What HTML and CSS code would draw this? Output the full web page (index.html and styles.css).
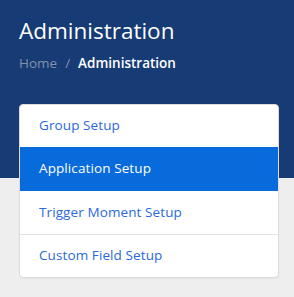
FILE: index.html
```html
<!DOCTYPE html>
<html>
<head>
<meta charset="utf-8">
<link rel="stylesheet" href="styles.css">
</head>
<body>
<header class="hero">
  <h1 class="title">Administration</h1>
  <nav class="crumbs">
    <span class="crumb-link">Home</span>
    <span class="crumb-sep">/</span>
    <span class="crumb-current">Administration</span>
  </nav>
</header>
<main class="content">
  <ul class="menu">
    <li class="menu-item">Group Setup</li>
    <li class="menu-item active">Application Setup</li>
    <li class="menu-item">Trigger Moment Setup</li>
    <li class="menu-item">Custom Field Setup</li>
  </ul>
</main>
</body>
</html>
```

FILE: styles.css
```css
* { box-sizing: border-box; }
html, body { margin: 0; padding: 0; }
body {
  background: #eeeeee;
  font-family: "Open Sans", "Noto Sans", sans-serif;
  width: 294px;
  height: 297px;
  overflow: hidden;
}
.hero {
  background: #173b74;
  height: 178px;
  padding: 15px 19px 0;
}
.title {
  margin: 0;
  color: #ffffff;
  font-size: 22.5px;
  font-weight: 400;
  line-height: 32px;
}
.crumbs {
  margin-top: 6px;
  font-size: 13.5px;
  line-height: 20px;
  display: flex;
  gap: 8px;
}
.crumb-link { color: #8192ad; }
.crumb-sep { color: #8192ad; }
.crumb-current { color: #ffffff; font-weight: 600; }
.content {
  margin-top: -74px;
  padding: 0 15px 0 19px;
}
.menu {
  list-style: none;
  margin: 0;
  padding: 0;
  background: #ffffff;
  border: 1px solid #dcdcdc;
  border-radius: 4px;
  overflow: hidden;
  box-shadow: 0 1px 1px rgba(0, 0, 0, 0.04);
}
.menu-item {
  height: 43px;
  padding: 0 19px 2px;
  display: flex;
  align-items: center;
  color: #2a69dc;
  font-size: 13.5px;
  letter-spacing: 0.1px;
  border-top: 1px solid #e2e2e2;
}
.menu-item:first-child { border-top: none; height: 42px; }
.menu-item.active {
  background: #076bdb;
  color: #ffffff;
  border-top: none;
  height: 44px;
}
.menu-item.active + .menu-item { border-top: none; }
```
